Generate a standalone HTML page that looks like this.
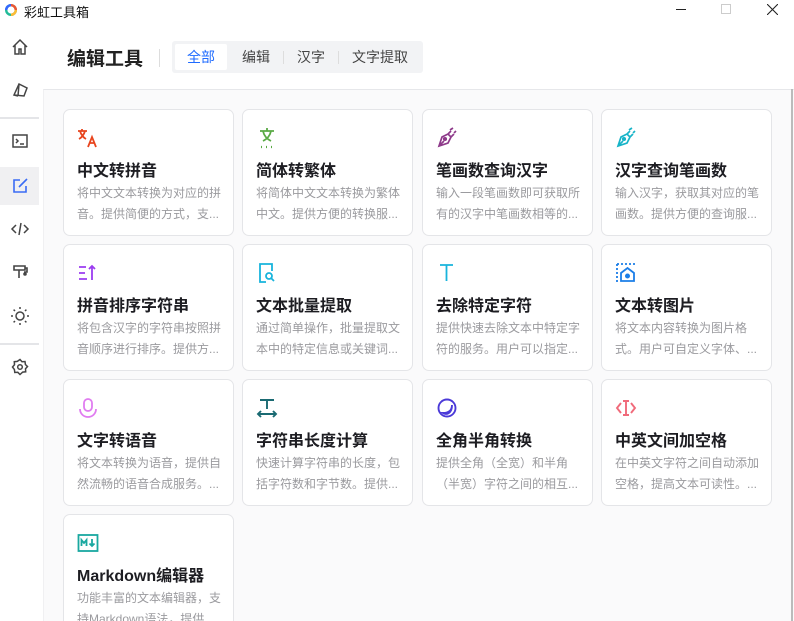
<!DOCTYPE html>
<html><head><meta charset="utf-8"><style>
*{margin:0;padding:0;box-sizing:border-box}
html{width:794px;height:621px;overflow:hidden}
body{width:794px;height:621px;overflow:hidden;background:#fff;font-family:"Liberation Sans","Noto Sans CJK SC",sans-serif;position:relative}
.tb{position:absolute;top:0;left:0;right:0;height:22px}
.tb .t{position:absolute;left:24px;top:2px;font-size:13px;color:#111}
.side{position:absolute;left:0;top:22px;width:43px;bottom:0;background:#fff}
.si{position:absolute;left:0;width:39px;height:38px;display:flex;align-items:center;justify-content:center}
.sep{position:absolute;left:0;width:39px;height:2px;background:#e4e5e8}
.main{position:absolute;left:43px;top:89px;right:0;bottom:0;background:#fafafb;border-top:1px solid #e6e7ea;border-left:1px solid #f0f0f2;overflow:hidden}
.h1{position:absolute;left:67px;top:44px;font-size:19px;font-weight:bold;color:#222}
.vd{position:absolute;left:159px;top:49px;width:1px;height:18px;background:#ddd}
.tabs{position:absolute;left:172px;top:41px;width:251px;height:32px;background:#f2f3f5;border-radius:3px}
.tab{position:absolute;top:3px;height:26px;font-size:14px;color:#444;line-height:26px;text-align:center}
.tab.a{background:#fff;color:#1f6bff;border-radius:2px}
.tdv{position:absolute;top:10px;width:1px;height:13px;background:#ddd}
.card{position:absolute;width:171px;height:127px;background:#fff;border:1px solid #e4e5e8;border-radius:7px}
.card .ic{position:absolute;left:13px;top:17px;width:22px;height:22px}
.card .tt{position:absolute;left:13px;top:47px;font-size:16px;font-weight:bold;color:#1d1d22;white-space:nowrap}
.card .ds{position:absolute;left:13px;top:73px;width:147px;font-size:12px;line-height:21px;color:#9a9a9e;height:42px;overflow:hidden}
.sb{position:absolute;right:1px;top:89px;width:2px;height:532px;background:#bbb}
</style></head><body>
<div class="tb">
<svg style="position:absolute;left:4px;top:3px" width="14" height="14"><circle cx="7" cy="7" r="4.8" fill="none" stroke="#2b9" stroke-width="2.4"/><path d="M7 2.2A4.8 4.8 0 0 1 11.8 7" fill="none" stroke="#e53" stroke-width="2.4"/><path d="M11.8 7A4.8 4.8 0 0 1 7 11.8" fill="none" stroke="#fb3" stroke-width="2.4"/><path d="M2.2 7A4.8 4.8 0 0 1 7 2.2" fill="none" stroke="#36f" stroke-width="2.4"/></svg>
<div class="t">彩虹工具箱</div>
<div style="position:absolute;left:676px;top:9px;width:10px;height:1px;background:#222"></div>
<div style="position:absolute;left:721px;top:4px;width:10px;height:10px;border:1px solid #ccc"></div>
<svg style="position:absolute;left:767px;top:4px" width="11" height="11"><path d="M0 0L11 11M11 0L0 11" stroke="#222" stroke-width="1.1"/></svg>
</div>
<div class="side">
<div class="si" style="top:6px"><svg width="18" height="18" fill="none" stroke="#444" stroke-width="1.5"><path d="M2 9L9 2l7 7M4 7v9h4v-5h2v5h4V7"/></svg></div>
<div class="si" style="top:49px"><svg width="18" height="18" fill="none" stroke="#444" stroke-width="1.5"><path d="M3 14L8 3l8 4-3 8zM8 3l-1 12M3 14l4 1"/></svg></div>
<div class="sep" style="top:95px"></div>
<div class="si" style="top:100px"><svg width="18" height="18" fill="none" stroke="#444" stroke-width="1.5"><rect x="2" y="3" width="14" height="12"/><path d="M5 7l2 2-2 2M9 12h4"/></svg></div>
<div class="si" style="top:145px;background:#f0f0f2"><svg width="18" height="18" fill="none" stroke="#3b6cf5" stroke-width="1.6"><path d="M9 3H3v12h12V9M8 10l8-8"/></svg></div>
<div class="si" style="top:188px"><svg width="20" height="18" fill="none" stroke="#444" stroke-width="1.5"><path d="M6 5L2 9l4 4M14 5l4 4-4 4M11 3L9 15"/></svg></div>
<div class="si" style="top:231px"><svg width="18" height="18" fill="none" stroke="#444" stroke-width="1.6"><path d="M3 3h11v4H3zM8 7v8M14 5h2v4h-3"/><circle cx="14" cy="11" r="1" fill="#444"/></svg></div>
<div class="si" style="top:275px"><svg width="20" height="20" fill="none" stroke="#444" stroke-width="1.5"><circle cx="10" cy="10" r="4"/><path d="M10 1v2M10 17v2M1 10h2M17 10h2M3.6 3.6l1.4 1.4M15 15l1.4 1.4M3.6 16.4L5 15M15 5l1.4-1.4"/></svg></div>
<div class="sep" style="top:321px"></div>
<div class="si" style="top:326px"><svg width="18" height="18" fill="none" stroke="#444" stroke-width="1.5"><path d="M9 1.5l2 2.2 3-.2.4 3 2.1 2-2 2.3.2 3-3 .3L9 16.5l-2.2-2.2-3 .2-.4-3L1.5 9l2-2.3-.2-3 3-.3z"/><circle cx="9" cy="9" r="2.3"/></svg></div>
</div>
<div class="h1">编辑工具</div>
<div class="vd"></div>
<div class="tabs">
<div class="tab a" style="left:3px;width:52px">全部</div>
<div class="tab" style="left:58px;width:52px">编辑</div>
<div class="tdv" style="left:111px"></div>
<div class="tab" style="left:112px;width:54px">汉字</div>
<div class="tdv" style="left:166px"></div>
<div class="tab" style="left:168px;width:80px">文字提取</div>
</div>
<div class="main">
<div style="position:absolute;left:-44px;top:-90px;width:794px;height:621px">
<div class="card" style="left:63px;top:109px"><svg class="ic" viewBox="0 0 22 22" fill="none" stroke="#e8451e" stroke-width="1.8"><path d="M1 4h9M5 2v2M3 4c1 4 4 7 6 8M8 4c-1 4-4 7-6 8"/><path d="M11 20l4-10 4 10M12.5 16h5"/></svg><div class="tt">中文转拼音</div><div class="ds">将中文文本转换为对应的拼音。提供简便的方式，支...</div></div>
<div class="card" style="left:242px;top:109px"><svg class="ic" viewBox="0 0 22 22" fill="none" stroke="#5aaa45" stroke-width="1.8"><path d="M4 4h14M11 1v3M7 4c1 5 4 8 8 10M15 4c-1 5-4 8-8 10"/><path d="M5 20h1M10 20h1M15 20h1" stroke-width="2.2"/></svg><div class="tt">简体转繁体</div><div class="ds">将简体中文文本转换为繁体中文。提供方便的转换服...</div></div>
<div class="card" style="left:422px;top:109px"><svg class="ic" viewBox="0 0 22 22" fill="none" stroke="#8e3a8a" stroke-width="1.7"><path d="M3 19l3-9 6-3 3 3-3 6zM3 19l5-5M12 7l3-3M15 10l3-3M14 3l3-2M18 6l2-2"/><circle cx="9" cy="12" r="1.2" fill="#8e3a8a"/></svg><div class="tt">笔画数查询汉字</div><div class="ds">输入一段笔画数即可获取所有的汉字中笔画数相等的...</div></div>
<div class="card" style="left:601px;top:109px"><svg class="ic" viewBox="0 0 22 22" fill="none" stroke="#18b4c8" stroke-width="1.7"><path d="M3 19l3-9 6-3 3 3-3 6zM3 19l5-5M12 7l3-3M15 10l3-3M14 3l3-2M18 6l2-2"/><circle cx="9" cy="12" r="1.2" fill="#18b4c8"/></svg><div class="tt">汉字查询笔画数</div><div class="ds">输入汉字，获取其对应的笔画数。提供方便的查询服...</div></div>

<div class="card" style="left:63px;top:244px"><svg class="ic" viewBox="0 0 22 22" fill="none" stroke="#9b3cf0" stroke-width="1.8"><path d="M2 5h7M2 11h6M2 17h8M15 18V4M12 7l3-3 3 3"/></svg><div class="tt">拼音排序字符串</div><div class="ds">将包含汉字的字符串按照拼音顺序进行排序。提供方...</div></div>
<div class="card" style="left:242px;top:244px"><svg class="ic" viewBox="0 0 22 22" fill="none" stroke="#18b4dc" stroke-width="1.8"><path d="M10 20H4V2h12v7"/><circle cx="13" cy="14" r="3"/><path d="M15 16l3 3"/></svg><div class="tt">文本批量提取</div><div class="ds">通过简单操作，批量提取文本中的特定信息或关键词...</div></div>
<div class="card" style="left:422px;top:244px"><svg class="ic" viewBox="0 0 22 22" fill="none" stroke="#18b4dc" stroke-width="1.8"><path d="M4 3h13M10.5 3v16"/></svg><div class="tt">去除特定字符</div><div class="ds">提供快速去除文本中特定字符的服务。用户可以指定...</div></div>
<div class="card" style="left:601px;top:244px"><svg class="ic" viewBox="0 0 22 22" fill="none" stroke="#1b7ee8" stroke-width="1.8"><path d="M2 2h18M2 2v18" stroke-dasharray="2 2"/><path d="M6 19h13v-8l-6.5-5L6 11z"/><circle cx="12.5" cy="14" r="1.6" fill="#1b7ee8"/></svg><div class="tt">文本转图片</div><div class="ds">将文本内容转换为图片格式。用户可自定义字体、...</div></div>

<div class="card" style="left:63px;top:379px"><svg class="ic" viewBox="0 0 22 22" fill="none" stroke="#e07cf0" stroke-width="1.8"><rect x="7" y="2" width="8" height="12" rx="4"/><path d="M3 12c0 5 4 8 8 8s8-3 8-8"/></svg><div class="tt">文字转语音</div><div class="ds">将文本转换为语音，提供自然流畅的语音合成服务。...</div></div>
<div class="card" style="left:242px;top:379px"><svg class="ic" viewBox="0 0 22 22" fill="none" stroke="#1a6a72" stroke-width="1.9"><path d="M4 3h14M11 3v9M2 17h18M5 14l-3 3 3 3M17 14l3 3-3 3"/></svg><div class="tt">字符串长度计算</div><div class="ds">快速计算字符串的长度，包括字符数和字节数。提供...</div></div>
<div class="card" style="left:422px;top:379px"><svg class="ic" viewBox="0 0 22 22" fill="none" stroke="#4b3ad8" stroke-width="1.9"><circle cx="11" cy="11" r="8.5"/><path d="M16 8c0 5-3 8-9 8 3 2 9 1 9-8z" fill="#4b3ad8"/></svg><div class="tt">全角半角转换</div><div class="ds">提供全角（全宽）和半角（半宽）字符之间的相互...</div></div>
<div class="card" style="left:601px;top:379px"><svg class="ic" viewBox="0 0 22 22" fill="none" stroke="#f06a7a" stroke-width="1.9"><path d="M6 6l-4 5 4 5M16 6l4 5-4 5M8 4h6M11 4v14M8 18h6"/></svg><div class="tt">中英文间加空格</div><div class="ds">在中英文字符之间自动添加空格，提高文本可读性。...</div></div>

<div class="card" style="left:63px;top:514px;height:130px"><svg class="ic" viewBox="0 0 22 22" fill="none" stroke="#1aa8a0" stroke-width="1.8"><rect x="1.5" y="3" width="19" height="16"/><path d="M4.5 14V8l2.5 3 2.5-3v6M15 7v7M12.5 11.5L15 14l2.5-2.5"/></svg><div class="tt">Markdown编辑器</div><div class="ds">功能丰富的文本编辑器，支持Markdown语法，提供...</div></div>
</div>
</div>
<div class="sb"></div>
</body></html>
